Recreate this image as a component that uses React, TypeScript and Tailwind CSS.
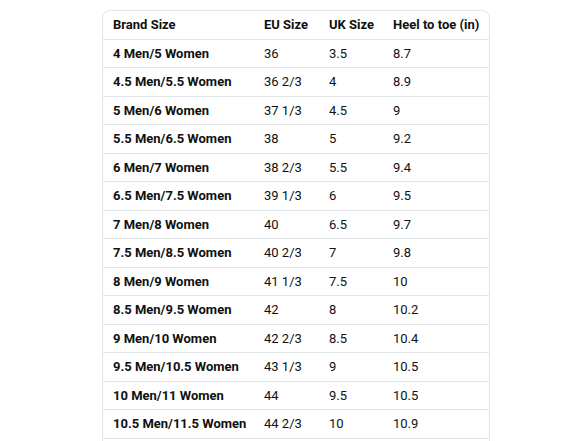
import React from "react";

const rows: [string, string, string, string][] = [
  ["4 Men/5 Women", "36", "3.5", "8.7"],
  ["4.5 Men/5.5 Women", "36 2/3", "4", "8.9"],
  ["5 Men/6 Women", "37 1/3", "4.5", "9"],
  ["5.5 Men/6.5 Women", "38", "5", "9.2"],
  ["6 Men/7 Women", "38 2/3", "5.5", "9.4"],
  ["6.5 Men/7.5 Women", "39 1/3", "6", "9.5"],
  ["7 Men/8 Women", "40", "6.5", "9.7"],
  ["7.5 Men/8.5 Women", "40 2/3", "7", "9.8"],
  ["8 Men/9 Women", "41 1/3", "7.5", "10"],
  ["8.5 Men/9.5 Women", "42", "8", "10.2"],
  ["9 Men/10 Women", "42 2/3", "8.5", "10.4"],
  ["9.5 Men/10.5 Women", "43 1/3", "9", "10.5"],
  ["10 Men/11 Women", "44", "9.5", "10.5"],
  ["10.5 Men/11.5 Women", "44 2/3", "10", "10.9"],
];

export default function App() {
  return (
    <div
      className="w-[588px] h-[441px] overflow-hidden bg-white pt-[10px] pl-[102px]"
      style={{ fontFamily: 'Roboto, "Noto Sans", sans-serif' }}
    >
      <div className="w-[388px] border border-[#e3e6e6] rounded-[8px] text-[13px] text-[#0f1111] whitespace-nowrap">
        <div className="grid grid-cols-[151px_65px_64px_1fr] h-[28.5px] items-center border-b border-[#e3e6e6] font-bold">
          <div className="pl-[10px]">Brand Size</div>
          <div className="pl-[10px]">EU Size</div>
          <div className="pl-[10px]">UK Size</div>
          <div className="pl-[10px]">Heel to toe (in)</div>
        </div>
        {rows.map((r, i) => (
          <div
            key={i}
            className="grid grid-cols-[151px_65px_64px_1fr] h-[28.5px] items-center border-b border-[#e3e6e6]"
          >
            <div className="pl-[10px] font-bold">{r[0]}</div>
            <div className="pl-[10px]">{r[1]}</div>
            <div className="pl-[10px]">{r[2]}</div>
            <div className="pl-[10px]">{r[3]}</div>
          </div>
        ))}
        <div className="h-[28.5px]" />
      </div>
    </div>
  );
}
